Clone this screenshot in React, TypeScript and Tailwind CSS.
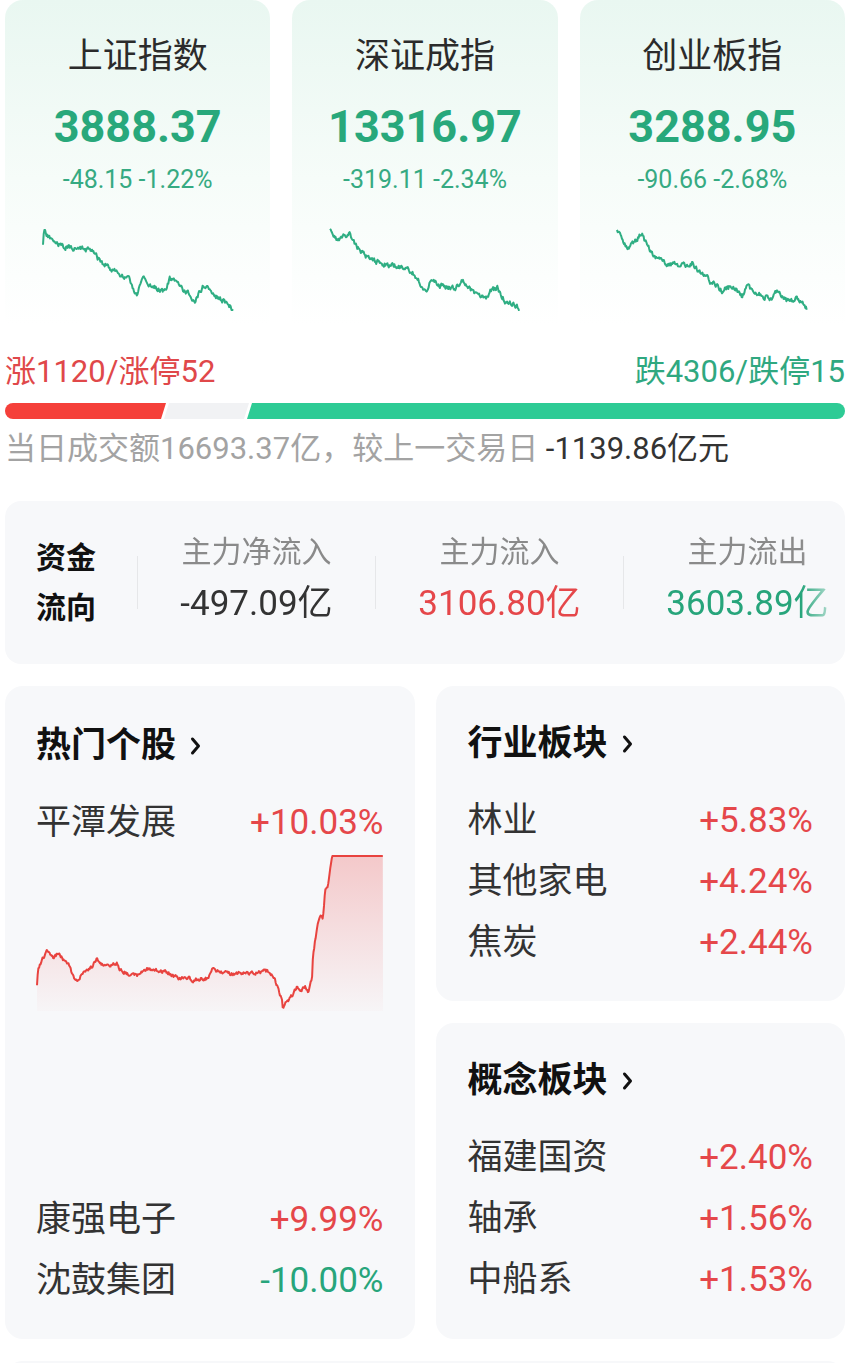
import React from "react";

type Pt = [number, number];

function rng(seed: number) {
  let s = seed >>> 0;
  return () => {
    s = (Math.imul(s, 1664525) + 1013904223) >>> 0;
    return s / 4294967296;
  };
}

function buildPts(anchors: Pt[], amp: number, seed: number, flatFrom = Infinity, step = 0.7): Pt[] {
  const r = rng(seed);
  let n = 0;
  const pts: Pt[] = [];
  const maxX = anchors[anchors.length - 1][0];
  let j = 0;
  for (let x = anchors[0][0]; x <= maxX + 0.001; x += step) {
    while (j < anchors.length - 2 && x > anchors[j + 1][0]) j++;
    const [x0, y0] = anchors[j];
    const [x1, y1] = anchors[j + 1];
    const t = x1 === x0 ? 0 : Math.min(1, Math.max(0, (x - x0) / (x1 - x0)));
    const y = y0 + (y1 - y0) * t;
    n = n * 0.55 + (r() - 0.5) * amp;
    pts.push([x, x >= flatFrom ? y : y + n]);
  }
  return pts;
}

function toPath(pts: Pt[]) {
  return pts.map((p, i) => `${i === 0 ? "M" : "L"}${p[0].toFixed(1)},${p[1].toFixed(1)}`).join("");
}

const spark1: Pt[] = [[0,17],[1,2],[5,8],[17,17],[37,20],[49,22],[57,32],[87,52],[94,67],[100,47],[107,57],[122,62],[127,50],[137,57],[152,72],[157,62],[162,55],[172,67],[182,72],[190,80]];
const spark2: Pt[] = [[0,1],[8,12],[19,4],[26,17],[41,32],[51,34],[66,37],[81,42],[91,55],[96,62],[101,52],[111,57],[126,60],[131,50],[146,67],[156,70],[161,62],[168,59],[176,74],[186,77],[190,80]];
const spark3: Pt[] = [[0,2],[10,20],[20,10],[25,4],[30,17],[40,30],[50,34],[65,37],[75,34],[85,44],[95,54],[105,62],[115,57],[125,67],[130,57],[140,65],[155,69],[160,62],[170,72],[180,70],[190,80]];

const hotAnchors: Pt[] = [[1,133],[2,115],[6,108],[11,96],[14,100],[17,105],[21,101],[24,103],[27,106],[34,113],[37,123],[42,130],[46,120],[51,116],[57,113],[61,105],[64,111],[71,113],[81,110],[84,116],[91,120],[97,123],[104,121],[111,116],[121,118],[131,119],[137,123],[144,126],[151,124],[157,128],[164,126],[172,125],[176,115],[181,118],[197,121],[214,120],[231,118],[237,123],[242,135],[246,148],[247,156],[251,148],[256,143],[261,133],[264,138],[269,133],[272,140],[276,126],[277,103],[279,88],[282,70],[284,63],[287,66],[289,38],[292,33],[294,18],[296,3],[347,3]];

function Spark({ anchors, seed }: { anchors: Pt[]; seed: number }) {
  const pts = buildPts(anchors, 4.5, seed).map(([x, y]) => [x + 1, y + 2] as Pt);
  return (
    <svg className="mt-[32px] block w-[192px] h-[84px]" viewBox="0 0 192 84">
      <path d={toPath(pts)} fill="none" stroke="#2fae83" strokeWidth="2" strokeLinejoin="round" />
    </svg>
  );
}

function HotChart() {
  const pts = buildPts(hotAnchors, 3.2, 7, 296);
  const line = toPath(pts);
  const area = line + "L347,158L1,158Z";
  return (
    <svg className="block w-[347px] h-[160px]" viewBox="0 0 347 160">
      <defs>
        <linearGradient id="hotfill" x1="0" y1="0" x2="0" y2="1">
          <stop offset="0%" stopColor="#ec5a5a" stopOpacity="0.3" />
          <stop offset="100%" stopColor="#ec5a5a" stopOpacity="0.02" />
        </linearGradient>
      </defs>
      <path d={area} fill="url(#hotfill)" />
      <path d={line} fill="none" stroke="#e8433f" strokeWidth="2" strokeLinejoin="round" />
    </svg>
  );
}

function Chevron() {
  return (
    <svg className="block w-[11px] h-[20px]" viewBox="0 0 11 20">
      <path d="M2.5 3 L8.5 10 L2.5 17" fill="none" stroke="#111" strokeWidth="3" strokeLinecap="round" strokeLinejoin="round" />
    </svg>
  );
}

function IndexCard({ title, value, change, anchors, seed }: { title: string; value: string; change: string; anchors: Pt[]; seed: number }) {
  return (
    <div className="flex flex-col items-center pt-[36px] pb-[14px] rounded-t-[18px] bg-[linear-gradient(180deg,#e9f7f1_0%,#f6fcf9_55%,#ffffff_100%)]">
      <div className="text-[35px] leading-[42px] text-[#2b2b2b]">{title}</div>
      <div className="mt-[23px] text-[45px] leading-[52px] font-bold text-[#28a87b]">{value}</div>
      <div className="mt-[12px] text-[25px] leading-[30px] text-[#36aa82]">{change}</div>
      <Spark anchors={anchors} seed={seed} />
    </div>
  );
}

function Row({ name, pct, up }: { name: string; pct: string; up: boolean }) {
  return (
    <div className="h-[61px] flex items-center justify-between text-[35px] leading-[44px]">
      <span className="text-[#333333]">{name}</span>
      <span className={up ? "text-[#e5474a]" : "text-[#27a57b]"}>{pct}</span>
    </div>
  );
}

function Header({ text }: { text: string }) {
  return (
    <div className="h-[44px] flex items-center gap-[14px]">
      <span className="text-[35px] leading-[44px] font-bold text-[#111111]">{text}</span>
      <Chevron />
    </div>
  );
}

function SectorCard({ title, rows, h }: { title: string; rows: { name: string; pct: string }[]; h: string }) {
  return (
    <div className={`${h} rounded-[18px] bg-[#f7f8fa] pt-[36px] px-[32px]`}>
      <Header text={title} />
      <div className="mt-[24px]">
        {rows.map((r) => (
          <Row key={r.name} name={r.name} pct={r.pct} up={true} />
        ))}
      </div>
    </div>
  );
}

export default function App() {
  return (
    <div className="w-[859px] min-h-[1363px] bg-white pl-[5px] pr-[14px] font-['Roboto','Noto_Sans_CJK_SC',sans-serif]">
      <div className="grid grid-cols-3 gap-x-[22px]">
        <IndexCard title="上证指数" value="3888.37" change="-48.15 -1.22%" anchors={spark1} seed={11} />
        <IndexCard title="深证成指" value="13316.97" change="-319.11 -2.34%" anchors={spark2} seed={23} />
        <IndexCard title="创业板指" value="3288.95" change="-90.66 -2.68%" anchors={spark3} seed={37} />
      </div>

      <div className="mt-[29px] flex justify-between text-[31px] leading-[36px]">
        <span className="text-[#e0484a]">涨1120/涨停52</span>
        <span className="text-[#2fa880]">跌4306/跌停15</span>
      </div>

      <div className="mt-[13px] h-[16px] flex">
        <div className="w-[161px] h-full rounded-l-full bg-[#f5403a] [clip-path:polygon(0_0,100%_0,calc(100%_-_5px)_100%,0_100%)]" />
        <div className="ml-[-2px] w-[85px] h-full bg-[#f1f2f4] [clip-path:polygon(5px_0,100%_0,calc(100%_-_5px)_100%,0_100%)]" />
        <div className="ml-[-2px] flex-1 h-full rounded-r-full bg-[#2ecb95] [clip-path:polygon(5px_0,100%_0,100%_100%,0_100%)]" />
      </div>

      <div className="mt-[12px] text-[31px] leading-[36px] whitespace-nowrap">
        <span className="text-[#a3a3a3]">当日成交额16693.37亿，较上一交易日 </span>
        <span className="text-[#333333]">-1139.86亿元</span>
      </div>

      <div className="mt-[34px] h-[163px] rounded-[16px] bg-[#f7f8fa] flex items-center overflow-hidden">
        <div className="w-[132px] shrink-0 pl-[31px] text-[30px] leading-[50px] font-bold text-[#111111]">
          <div>资金</div>
          <div>流向</div>
        </div>
        <div className="flex-1 flex items-center overflow-hidden [mask-image:linear-gradient(90deg,#000_calc(100%_-_44px),transparent)]">
          {[
            { label: "主力净流入", value: "-497.09亿", color: "text-[#333333]", w: "w-[238px]" },
            { label: "主力流入", value: "3106.80亿", color: "text-[#e5474a]", w: "w-[248px]" },
            { label: "主力流出", value: "3603.89亿", color: "text-[#27a57b]", w: "w-[248px]" },
          ].map((c) => (
            <div key={c.label} className={`${c.w} shrink-0 flex items-center`}>
              <div className="w-px h-[53px] bg-[#e6e7e9]" />
              <div className="flex-1 flex flex-col items-center pb-[7px]">
                <div className="text-[30px] leading-[40px] text-[#8a8a8a]">{c.label}</div>
                <div className={`mt-[10px] text-[35px] leading-[44px] ${c.color}`}>{c.value}</div>
              </div>
            </div>
          ))}
        </div>
      </div>

      <div className="mt-[22px] grid grid-cols-2 gap-x-[21px]">
        <div className="h-[653px] rounded-[18px] bg-[#f7f8fa] pt-[38px] px-[31px] pb-[28px] flex flex-col">
          <Header text="热门个股" />
          <div className="mt-[24px]">
            <Row name="平潭发展" pct="+10.03%" up={true} />
          </div>
          <HotChart />
          <div className="mt-auto">
            <Row name="康强电子" pct="+9.99%" up={true} />
            <Row name="沈鼓集团" pct="-10.00%" up={false} />
          </div>
        </div>
        <div className="flex flex-col gap-[22px]">
          <SectorCard
            title="行业板块"
            h="h-[315px]"
            rows={[
              { name: "林业", pct: "+5.83%" },
              { name: "其他家电", pct: "+4.24%" },
              { name: "焦炭", pct: "+2.44%" },
            ]}
          />
          <SectorCard
            title="概念板块"
            h="h-[316px]"
            rows={[
              { name: "福建国资", pct: "+2.40%" },
              { name: "轴承", pct: "+1.56%" },
              { name: "中船系", pct: "+1.53%" },
            ]}
          />
        </div>
      </div>

      <div className="mt-[22px] h-[40px] rounded-t-[18px] bg-[#f7f8fa]" />
    </div>
  );
}
